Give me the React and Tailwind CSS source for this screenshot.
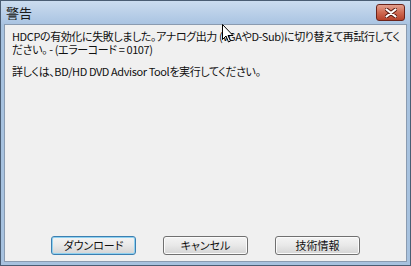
import React from 'react';

const jp = { fontFamily: '"Noto Sans CJK JP", "Noto Sans", sans-serif', fontFeatureSettings: '"palt"' };

const Button = ({ children, focused }) => (
  <button
    className={`w-[85px] h-[19px] rounded-[3px] border text-[11px] leading-none text-[#111] bg-gradient-to-b from-[#f4f4f4] via-[#e8e8e8] to-[#d4d4d4] ${
      focused ? 'border-[#3c7fb1] shadow-[inset_0_0_0_1px_#8fd1f0]' : 'border-[#707070] shadow-[inset_0_0_0_1px_#fbfbfb]'
    }`}
    style={jp}
  >
    {children}
  </button>
);

const Cursor = () => (
  <svg width="12" height="19" viewBox="0 0 12 19" className="absolute left-[221px] top-[23px]">
    <path d="M0.5 0.5 L0.5 15.5 L4 12 L6.5 18 L8.5 17 L6 11.5 L11 11.5 Z" fill="#fff" stroke="#000" strokeWidth="1" />
  </svg>
);

export default function App() {
  return (
    <div className="relative w-[411px] h-[266px] overflow-hidden bg-[#a7c2df] border border-[#4a5d73] flex flex-col">
      <div className="h-[23px] shrink-0 flex items-center justify-between pl-[5px] pr-[5px] bg-gradient-to-b from-[#cbdcef] to-[#aac4e2]">
        <span className="text-[13px] text-[#1b1b1b]" style={jp}>警告</span>
        <div className="w-[29px] h-[17px] rounded-[3px] border border-[#6b231a] bg-gradient-to-b from-[#e2a08f] via-[#cf6a52] to-[#b5412a] flex items-center justify-center">
          <svg width="12" height="10" viewBox="0 0 12 10">
            <path d="M1.5 1.5 L10.5 8.5 M10.5 1.5 L1.5 8.5" stroke="#5a1a10" strokeWidth="4" strokeLinecap="round" />
            <path d="M1.5 1.5 L10.5 8.5 M10.5 1.5 L1.5 8.5" stroke="#fff" strokeWidth="2.2" strokeLinecap="round" />
          </svg>
        </div>
      </div>
      <div className="flex-1 mx-[3px] mb-[3px] border border-[#8a9bb0] bg-[#f0f0f0] flex flex-col">
        <div className="pl-[7px] pt-[5px] text-[11px] leading-[13px] tracking-[-0.4px] text-[#111] whitespace-nowrap" style={jp}>
          <p>
            HDCPの有効化に失敗しました。アナログ出力 (VGAやD-Sub)に切り替えて再試行してく
            <br />
            ださい。 - (エラーコード = 0107)
          </p>
          <p className="mt-[9px]">詳しくは、BD/HD DVD Advisor Toolを実行してください。</p>
        </div>
        <div className="mt-auto mb-[6px] flex justify-center gap-[27px]">
          <Button focused>ダウンロード</Button>
          <Button>キャンセル</Button>
          <Button>技術情報</Button>
        </div>
      </div>
      <Cursor />
    </div>
  );
}
